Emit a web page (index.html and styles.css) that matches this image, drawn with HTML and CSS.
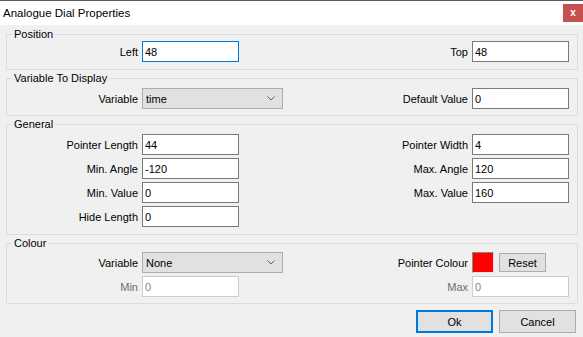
FILE: index.html
```html
<!DOCTYPE html>
<html lang="en">
<head>
<meta charset="UTF-8">
<title>Analogue Dial Properties</title>
<link rel="stylesheet" href="styles.css">
</head>
<body>

<div class="titlebar">
  <span class="title">Analogue Dial Properties</span>
  <span class="closeButton">x</span>
</div>

<fieldset class="group groupPosition">
  <legend>Position</legend>
  <div class="row">
    <label>Left</label><input type="text" class="focused" value="48">
    <label>Top</label><input type="text" value="48">
  </div>
</fieldset>

<fieldset class="group groupVariable">
  <legend>Variable To Display</legend>
  <div class="row">
    <label>Variable</label>
    <div class="combo"><span>time</span>
      <svg width="8" height="5" viewBox="0 0 8 5"><polyline points="0.5,0.5 4,4 7.5,0.5" fill="none" stroke="#606060" stroke-width="1"/></svg>
    </div>
    <label>Default Value</label><input type="text" value="0">
  </div>
</fieldset>

<fieldset class="group groupGeneral">
  <legend>General</legend>
  <div class="row">
    <label>Pointer Length</label><input type="text" value="44">
    <label>Pointer Width</label><input type="text" value="4">
  </div>
  <div class="row">
    <label>Min. Angle</label><input type="text" value="-120">
    <label>Max. Angle</label><input type="text" value="120">
  </div>
  <div class="row">
    <label>Min. Value</label><input type="text" value="0">
    <label>Max. Value</label><input type="text" value="160">
  </div>
  <div class="row">
    <label>Hide Length</label><input type="text" value="0">
  </div>
</fieldset>

<fieldset class="group groupColour">
  <legend>Colour</legend>
  <div class="row">
    <label>Variable</label>
    <div class="combo"><span>None</span>
      <svg width="8" height="5" viewBox="0 0 8 5"><polyline points="0.5,0.5 4,4 7.5,0.5" fill="none" stroke="#606060" stroke-width="1"/></svg>
    </div>
    <label>Pointer Colour</label>
    <div class="colourPick">
      <span class="swatch"></span>
      <button class="smallButton">Reset</button>
    </div>
  </div>
  <div class="row disabledRow">
    <label>Min</label><input type="text" value="0" disabled>
    <label>Max</label><input type="text" value="0" disabled>
  </div>
</fieldset>

<div class="buttons">
  <button class="dlgButton defaultButton">Ok</button>
  <button class="dlgButton">Cancel</button>
</div>

</body>
</html>
```

FILE: styles.css
```css
body {
  margin: 0;
  background-color: #f0f0f0;
  font-family: "Liberation Sans", Arial, sans-serif;
  font-size: 11px;
  color: #000;
}

/* Window title */
.titlebar {
  display: flex;
  justify-content: space-between;
  align-items: flex-start;
  height: 24px;
  background-color: #fff;
  border-top: 1px solid #5a5a5a;
}
.title {
  font-size: 11.5px;
  line-height: 24px;
  padding-left: 3px;
}
.closeButton {
  width: 20px;
  height: 18px;
  margin-top: 3px;
  background-color: #c75050;
  color: #fff;
  font-weight: bold;
  font-size: 10px;
  line-height: 17px;
  text-align: center;
}

/* Group boxes */
.group {
  margin: 2px 5px 0 6px;
  padding: 3px 8px 7px 0;
  border: 1px solid #dcdcdc;
  min-width: 0;
}
.group legend {
  margin-left: 5px;
  padding: 0 2px;
  line-height: 13px;
}
.groupPosition {
  margin-top: 3px;
  padding-top: 0;
}
.groupVariable {
  padding-bottom: 6px;
}
.groupColour {
  padding-top: 2px;
  padding-bottom: 6px;
}

.row {
  display: grid;
  grid-template-columns: 135px 141px 1fr 97px;
  align-items: center;
  height: 21px;
}
.row + .row {
  margin-top: 3px;
}
.row label {
  text-align: right;
  padding-right: 4px;
  white-space: nowrap;
}

input[type="text"] {
  box-sizing: border-box;
  width: 97px;
  height: 21px;
  margin: 0;
  padding: 0 2px;
  border: 1px solid #7a7a7a;
  background-color: #fff;
  font-family: "Liberation Sans", Arial, sans-serif;
  font-size: 11px;
  color: #000;
  outline: none;
}
input.focused {
  border-color: #0078d7;
}
input[disabled] {
  border-color: #cccccc;
  color: #838383;
  background-color: #fff;
}
.disabledRow label {
  color: #6d6d6d;
}

/* Drop down list */
.combo {
  box-sizing: border-box;
  width: 141px;
  height: 21px;
  display: flex;
  justify-content: space-between;
  align-items: center;
  padding: 0 7px 0 3px;
  border: 1px solid #adadad;
  background-color: #e1e1e1;
}

.colourPick {
  display: flex;
  align-items: center;
  gap: 5px;
}
.swatch {
  box-sizing: border-box;
  width: 22px;
  height: 21px;
  background-color: #ff0000;
  border: 1px solid #8a8a8a;
  border-right-color: #e3e3e3;
  border-bottom-color: #e3e3e3;
}
.smallButton {
  box-sizing: border-box;
  width: 47px;
  height: 19px;
  margin: 0;
  padding: 0;
  border: 1px solid #adadad;
  background-color: #e1e1e1;
  font-family: "Liberation Sans", Arial, sans-serif;
  font-size: 11px;
  color: #000;
}

/* Ok / Cancel */
.buttons {
  display: flex;
  justify-content: flex-end;
  gap: 6px;
  margin: 6px 7px 0 0;
}
.dlgButton {
  box-sizing: border-box;
  width: 77px;
  height: 23px;
  margin: 0;
  padding: 0;
  border: 1px solid #adadad;
  background-color: #e1e1e1;
  font-family: "Liberation Sans", Arial, sans-serif;
  font-size: 11px;
  color: #000;
}
.defaultButton {
  border: 2px solid #0078d7;
}
```
